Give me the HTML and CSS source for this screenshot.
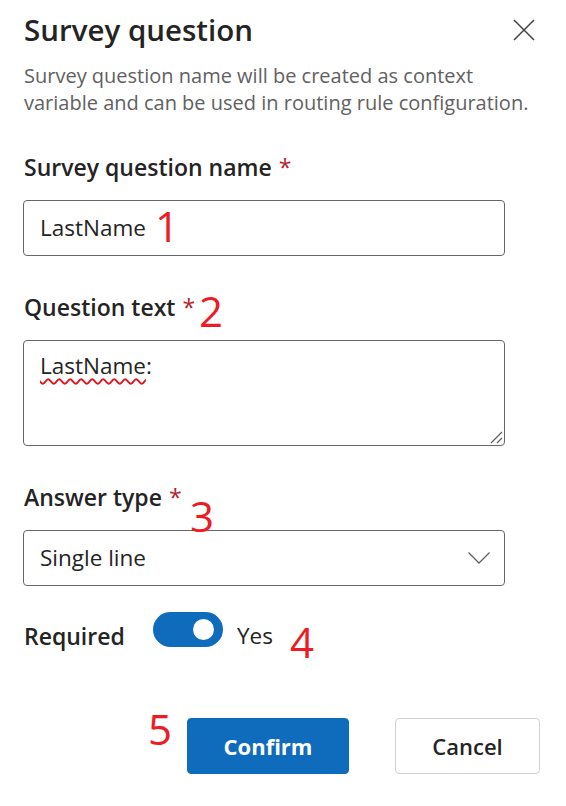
FILE: index.html
```html
<!DOCTYPE html>
<html lang="en">
<head>
<meta charset="utf-8">
<title>Survey question</title>
<link rel="stylesheet" href="styles.css">
</head>
<body>
<div class="panel">
  <header class="head">
    <h1 class="title">Survey question</h1>
    <button class="close" aria-label="Close">
      <svg width="22" height="22" viewBox="0 0 22 22"><path d="M1 1 L21 21 M21 1 L1 21" stroke="#424242" stroke-width="1.5" fill="none"/></svg>
    </button>
  </header>
  <p class="desc">Survey question name will be created as context variable and can be used in routing rule configuration.</p>

  <div class="field">
    <div class="label">Survey question name <span class="req">*</span></div>
    <div class="box input"><span class="value">LastName</span><span class="num num-1">1</span></div>
  </div>

  <div class="field">
    <div class="label">Question text <span class="req">*</span><span class="num num-2">2</span></div>
    <div class="box area">
      <span class="value"><span class="squiggle">LastName</span>:</span>
      <svg class="grip" width="14" height="14" viewBox="0 0 14 14"><path d="M2 13 L13 2 M8 13 L13 8" stroke="#616161" stroke-width="1.3" fill="none"/></svg>
    </div>
  </div>

  <div class="field field-3">
    <div class="label">Answer type <span class="req">*</span></div>
    <span class="num num-3">3</span>
    <div class="box select">
      <span class="value">Single line</span>
      <svg class="chev" width="24" height="14" viewBox="0 0 24 14"><path d="M1.5 1.5 L12 12 L22.5 1.5" stroke="#616161" stroke-width="1.3" fill="none"/></svg>
    </div>
  </div>

  <div class="toggle-row">
    <div class="label toggle-label">Required</div>
    <div class="switch"><span class="knob"></span></div>
    <span class="yes">Yes</span>
    <span class="num num-4">4</span>
  </div>

  <div class="actions">
    <span class="num num-5">5</span>
    <button class="btn primary">Confirm</button>
    <button class="btn secondary">Cancel</button>
  </div>
</div>
</body>
</html>
```
FILE: styles.css
```css
* { box-sizing: border-box; }
body {
  margin: 0;
  background: #ffffff;
  font-family: "Open Sans", "Noto Sans", sans-serif;
  color: #242424;
}
.panel {
  padding: 12px 26px 0 23px;
}
.head {
  display: flex;
  justify-content: space-between;
  align-items: center;
  height: 36px;
}
.title {
  margin: 0 0 0 1px;
  font-size: 29.5px;
  line-height: 36px;
  font-weight: 600;
  letter-spacing: 0;
}
.close {
  border: 0;
  background: none;
  padding: 0;
  margin-right: 5px;
  width: 22px;
  height: 22px;
  display: flex;
}
.desc {
  margin: 14px 0 0 1px;
  max-width: 510px;
  font-size: 20px;
  line-height: 27px;
  color: #616161;
  letter-spacing: 0;
}
.field {
  margin-top: 35px;
}
.field-3 { position: relative; }
.label {
  margin-left: 1px;
  font-size: 23px;
  line-height: 32px;
  font-weight: 600;
  display: flex;
  align-items: flex-start;
  height: 32px;
}
.req {
  color: #b3232b;
  font-weight: 400;
  margin-left: 7px;
}
.box {
  margin-top: 17px;
  width: 482px;
  border: 1px solid #666666;
  border-radius: 4px;
  font-size: 22.5px;
  line-height: 32px;
}
.input {
  height: 56px;
  display: flex;
  align-items: center;
  padding: 0 15px 0 16px;
}
.area {
  height: 106px;
  padding: 9px 16px 0;
  position: relative;
}
.squiggle {
  text-decoration: underline wavy #e0141e;
  text-decoration-thickness: 1.5px;
  text-underline-offset: 4px;
  text-decoration-skip-ink: none;
}
.grip {
  position: absolute;
  right: 1px;
  bottom: 1px;
}
.select {
  height: 56px;
  display: flex;
  align-items: center;
  justify-content: space-between;
  padding: 0 13px 0 16px;
}
.num {
  color: #ed1c24;
  font-size: 42px;
  line-height: 42px;
  font-weight: 400;
}
.num-1 { margin-left: 9px; margin-top: -4px; }
.num-2 {
  margin-left: 4px;
  line-height: 32px;
  position: relative;
  top: 4px;
}
.num-3 {
  position: absolute;
  left: 167px;
  top: 14px;
}
.toggle-row {
  margin-top: 26px;
  display: flex;
  align-items: flex-start;
}
.toggle-label {
  width: 129px;
  margin-top: 8px;
}
.switch {
  width: 70px;
  height: 35px;
  border-radius: 18px;
  background: #0f6cbd;
  display: flex;
  align-items: center;
  justify-content: flex-end;
  padding-right: 9px;
}
.knob {
  width: 21px;
  height: 21px;
  border-radius: 50%;
  background: #ffffff;
}
.yes {
  margin-left: 14px;
  margin-top: 8px;
  font-size: 22.5px;
  line-height: 32px;
}
.num-4 {
  margin-left: 17px;
  margin-top: 9px;
}
.actions {
  margin-top: 48px;
  display: flex;
  align-items: flex-start;
  justify-content: flex-end;
}
.num-5 {
  line-height: 36px;
  margin-right: 15px;
}
.btn {
  margin-top: 7px;
  height: 56px;
  border-radius: 4px;
  font-family: "Open Sans", "Noto Sans", sans-serif;
  font-size: 22px;
}
.primary {
  width: 162px;
  background: #0f6cbd;
  border: 1px solid #0f6cbd;
  color: #ffffff;
  font-weight: 700;
}
.secondary {
  width: 145px;
  margin-left: 46px;
  background: #ffffff;
  border: 1px solid #d1d1d1;
  color: #242424;
  font-weight: 600;
}
```
